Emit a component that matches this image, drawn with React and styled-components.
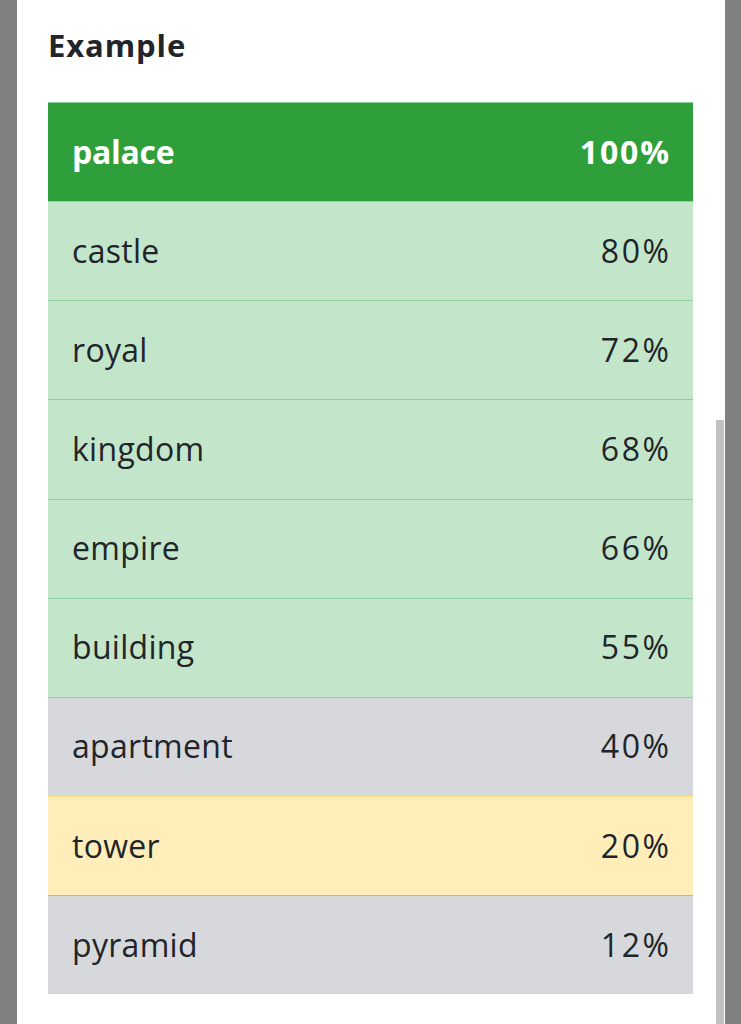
import React from "react";
import styled, { createGlobalStyle } from "styled-components";

const GlobalStyle = createGlobalStyle`
  html, body {
    margin: 0;
    padding: 0;
    background: #808080;
    height: 100%;
    overflow: hidden;
  }
  * {
    box-sizing: border-box;
  }
`;

const Page = styled.div`
  display: flex;
  height: 1024px;
  padding-left: 17px;
`;

const Panel = styled.div`
  position: relative;
  width: 708px;
  height: 100%;
  background: #fff;
  padding: 27px 32px 0 31px;
  font-family: "Open Sans", "Noto Sans", sans-serif;
  color: #212529;
`;

const Heading = styled.h2`
  margin: 0 0 39px 0;
  font-size: 31px;
  line-height: 36px;
  font-weight: 700;
  letter-spacing: 0.9px;
  color: #212529;
`;

const Table = styled.div`
  display: flex;
  flex-direction: column;
  width: 645px;
`;

const palette = {
  header: { bg: "#2e9f3b", border: "#8fd19e", color: "#fff" },
  success: { bg: "#c3e6cb", border: "#8fd19e", color: "#212529" },
  secondary: { bg: "#d6d8db", border: "#b3b7bb", color: "#212529" },
  warning: { bg: "#ffeeba", border: "#ffdf7e", color: "#212529" },
};

const Row = styled.div`
  display: flex;
  align-items: center;
  justify-content: space-between;
  height: 99.15px;
  padding: 0 24px 2px;
  background: ${(p) => palette[p.$variant].bg};
  border-top: 1px solid ${(p) => palette[p.$variant].border};
  color: ${(p) => palette[p.$variant].color};
  font-size: 32px;
  font-weight: ${(p) => (p.$bold ? 700 : 400)};
`;

const Word = styled.span`
  white-space: nowrap;
  letter-spacing: ${(p) => (p.$bold ? "-0.3px" : "0.3px")};
`;

const Score = styled.span`
  white-space: nowrap;
  letter-spacing: ${(p) => (p.$bold ? "1.8px" : "2.6px")};
  margin-right: ${(p) => (p.$bold ? "-1.8px" : "-2.6px")};
`;

const Thumb = styled.div`
  position: absolute;
  right: 1px;
  top: 420px;
  bottom: 0;
  width: 8px;
  background: #c1c1c1;
`;

const rows = [
  { word: "palace", score: 100, variant: "header" },
  { word: "castle", score: 80, variant: "success" },
  { word: "royal", score: 72, variant: "success" },
  { word: "kingdom", score: 68, variant: "success" },
  { word: "empire", score: 66, variant: "success" },
  { word: "building", score: 55, variant: "success" },
  { word: "apartment", score: 40, variant: "secondary" },
  { word: "tower", score: 20, variant: "warning" },
  { word: "pyramid", score: 12, variant: "secondary" },
];

export default function App() {
  return (
    <>
      <GlobalStyle />
      <Page>
        <Panel>
          <Heading>Example</Heading>
          <Table>
            {rows.map((r) => {
              const bold = r.variant === "header";
              return (
                <Row key={r.word} $variant={r.variant} $bold={bold}>
                  <Word $bold={bold}>{r.word}</Word>
                  <Score $bold={bold}>{r.score}%</Score>
                </Row>
              );
            })}
          </Table>
          <Thumb />
        </Panel>
      </Page>
    </>
  );
}
